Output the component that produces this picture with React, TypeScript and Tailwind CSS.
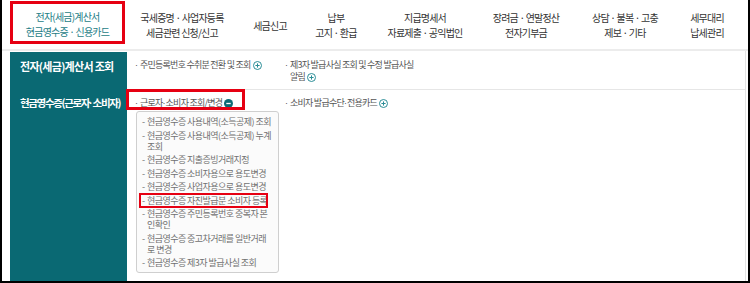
import React from "react";

const navItems = [
  { lines: ["전자(세금)계산서", "현금영수증 · 신용카드"], cls: "w-[115px]", active: true },
  { lines: ["국세증명 · 사업자등록", "세금관련 신청/신고"], cls: "w-[114px]" },
  { lines: ["세금신고"], cls: "w-[62px]" },
  { lines: ["납부", "고지 · 환급"], cls: "w-[70px]" },
  { lines: ["지급명세서", "자료제출 · 공익법인"], cls: "w-[108px]" },
  { lines: ["장려금 · 연말정산", "전자기부금"], cls: "w-[94px]" },
  { lines: ["상담 · 불복 · 고충", "제보 · 기타"], cls: "w-[104px]" },
  { lines: ["세무대리", "납세관리"], cls: "w-[60px]" },
];

const dropItems: { lines: string[]; hi?: boolean }[] = [
  { lines: ["현금영수증 사용내역(소득공제) 조회"] },
  { lines: ["현금영수증 사용내역(소득공제) 누계", "조회"] },
  { lines: ["현금영수증 지출증빙거래지정"] },
  { lines: ["현금영수증 소비자용으로 용도변경"] },
  { lines: ["현금영수증 사업자용으로 용도변경"] },
  { lines: ["현금영수증 자진발급분 소비자 등록"], hi: true },
  { lines: ["현금영수증 주민등록번호 중복자 본", "인확인"] },
  { lines: ["현금영수증 중고차거래를 일반거래", "로 변경"] },
  { lines: ["현금영수증 제3자 발급사실 조회"] },
];

function Dot() {
  return <span className="font-['Liberation_Sans',sans-serif] tracking-normal">·</span>;
}

function PlusIcon() {
  return (
    <svg width="9" height="9" viewBox="0 0 9 9" className="ml-[2px] shrink-0">
      <circle cx="4.5" cy="4.5" r="4" fill="white" stroke="#2a8d96" strokeWidth="1" />
      <path d="M4.5 2.4V6.6M2.4 4.5H6.6" stroke="#2a8d96" strokeWidth="1" />
    </svg>
  );
}

function MinusIcon() {
  return (
    <svg width="9" height="9" viewBox="0 0 9 9" className="ml-[2px] shrink-0">
      <circle cx="4.5" cy="4.5" r="4.5" fill="#0b6b75" />
      <path d="M2.3 4.5H6.7" stroke="white" strokeWidth="1.3" />
    </svg>
  );
}

export default function App() {
  return (
    <div className="relative w-[750px] h-[283px] overflow-hidden bg-white border-x-2 border-b-2 border-black font-['Noto_Sans_CJK_KR','Noto_Sans',sans-serif]">
      {/* top navigation */}
      <div className="flex h-[49px] pl-[8px]">
        {navItems.map((n, i) =>
          n.active ? (
            <div
              key={i}
              className={`${n.cls} mt-[1px] h-[43px] border-[3px] border-[#e60012] flex items-center justify-center pt-[2px] text-center text-[10px] leading-[15px] tracking-[-0.8px] text-[#1d7d86] whitespace-nowrap`}
            >
              <span>
                {n.lines[0]}
                <br />
                {n.lines[1]}
              </span>
            </div>
          ) : (
            <div
              key={i}
              className={`${n.cls} flex items-center justify-center pt-[1px] text-center text-[10px] leading-[15px] tracking-[-0.8px] text-[#333333] whitespace-nowrap`}
            >
              <span>
                {n.lines.map((l, j) => (
                  <React.Fragment key={j}>
                    {j > 0 && <br />}
                    {l}
                  </React.Fragment>
                ))}
              </span>
            </div>
          )
        )}
      </div>
      <div className="h-[2px] bg-[#ececec]" />

      {/* body */}
      <div className="flex h-[230px] pl-[8px] pr-[2px]">
        <div className="w-[117px] mt-[1px] bg-[#0a6973] text-white font-bold leading-[14px] whitespace-nowrap">
          <div className="h-[38px] pt-[7px] pl-[10px] text-[11px] tracking-[-0.7px]">전자(세금)계산서 조회</div>
          <div className="pt-[6px] pl-[10px] text-[10.5px] tracking-[-1.35px]">
            현금영수증(근로자<Dot />소비자)
          </div>
        </div>

        <div className="flex-1 border-r border-[#e4e4e4] text-[9px] leading-[12px] tracking-[-0.75px] text-[#555555] whitespace-nowrap">
          {/* row 1 */}
          <div className="flex h-[39px] pt-[8px] border-b border-[#e6e6e6]">
            <div className="w-[158px] pl-[8px]">
              <span className="inline-flex items-center">
                <span className="mr-[2px]"><Dot /></span>주민등록번호 수취분 전환 및 조회
                <PlusIcon />
              </span>
            </div>
            <div className="flex">
              <span className="mr-[2px]"><Dot /></span>
              <div className="flex flex-col">
                <span>제3자 발급사실 조회 및 수정 발급사실</span>
                <span className="inline-flex items-center">
                  알림
                  <PlusIcon />
                </span>
              </div>
            </div>
          </div>

          {/* row 2 */}
          <div className="flex pt-[7px]">
            <div className="w-[158px] pl-[8px]">
              <span className="relative inline-flex items-center">
                <span className="mr-[2px]"><Dot /></span>근로자<Dot />소비자 조회/변경
                <MinusIcon />
                <span className="absolute left-[-9px] top-[-8px] w-[119px] h-[21px] border-[3px] border-[#e60012]" />
              </span>
              <div className="mt-[2px] ml-[1px] w-[143px] border border-[#cfcfcf] rounded-[3px] bg-[#fbfbfb] pt-[4px] pb-[4px] pl-[5px] text-[#707070] text-[9px] leading-[11px] tracking-[-0.55px] flex flex-col gap-[2.5px]">
                {dropItems.map((d, i) => (
                  <div key={i} className="relative flex">
                    <span className="w-[5px] shrink-0">-</span>
                    <span>
                      {d.lines.map((l, j) => (
                        <React.Fragment key={j}>
                          {j > 0 && <br />}
                          {l}
                        </React.Fragment>
                      ))}
                    </span>
                    {d.hi && (
                      <span className="absolute left-[-3px] top-[-2px] w-[129px] h-[15px] border-[2.5px] border-[#e60012]" />
                    )}
                  </div>
                ))}
              </div>
            </div>
            <div>
              <span className="inline-flex items-center">
                <span className="mr-[2px]"><Dot /></span>소비자 발급수단<Dot />전용카드
                <PlusIcon />
              </span>
            </div>
          </div>
        </div>
      </div>
    </div>
  );
}
